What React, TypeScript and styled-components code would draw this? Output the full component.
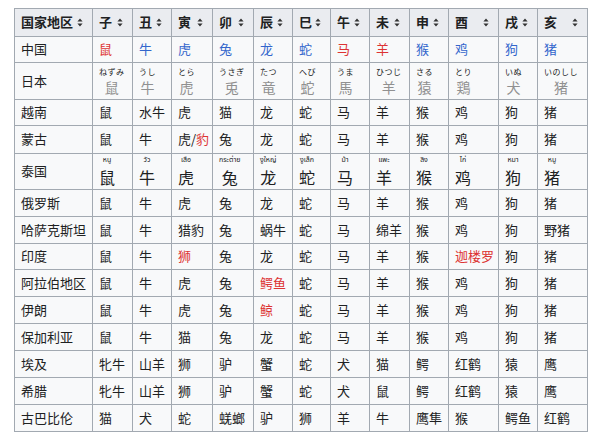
import React from 'react'
import styled, { createGlobalStyle } from 'styled-components'

const GlobalStyle = createGlobalStyle`
  body {
    margin: 0;
    background: #fff;
    font-family: "Noto Sans CJK SC", "Noto Sans", sans-serif;
    color: #202122;
  }
`

type Tone = 'plain' | 'blue' | 'red'

type Cell =
  | string
  | { text: string, tone?: Tone }
  | { parts: { text: string, tone?: Tone }[] }
  | { reading: string, base: string, kind: 'ja' | 'th' }

interface Row {
  name: string
  height: number
  cells: Cell[]
}

const headers = ['国家地区', '子', '丑', '寅', '卯', '辰', '巳', '午', '未', '申', '酉', '戌', '亥']
const widths = [78, 40, 39, 41, 41, 39, 38, 39, 40, 39, 50, 39, 50]

const b = (text: string): Cell => ({ text, tone: 'blue' })
const r = (text: string): Cell => ({ text, tone: 'red' })
const ja = (reading: string, base: string): Cell => ({ reading, base, kind: 'ja' })
const th = (reading: string, base: string): Cell => ({ reading, base, kind: 'th' })

const rows: Row[] = [
  { name: '中国', height: 26, cells: [r('鼠'), b('牛'), b('虎'), b('兔'), b('龙'), b('蛇'), r('马'), r('羊'), b('猴'), b('鸡'), b('狗'), b('猪')] },
  { name: '日本', height: 37, cells: [ja('ねずみ', '鼠'), ja('うし', '牛'), ja('とら', '虎'), ja('うさぎ', '兎'), ja('たつ', '竜'), ja('へび', '蛇'), ja('うま', '馬'), ja('ひつじ', '羊'), ja('さる', '猿'), ja('とり', '鶏'), ja('いぬ', '犬'), ja('いのしし', '猪')] },
  { name: '越南', height: 26, cells: ['鼠', '水牛', '虎', '猫', '龙', '蛇', '马', '羊', '猴', '鸡', '狗', '猪'] },
  { name: '蒙古', height: 28, cells: ['鼠', '牛', { parts: [{ text: '虎/' }, { text: '豹', tone: 'red' }] }, '兔', '龙', '蛇', '马', '羊', '猴', '鸡', '狗', '猪'] },
  { name: '泰国', height: 36, cells: [th('หนู', '鼠'), th('วัว', '牛'), th('เสือ', '虎'), th('กระต่าย', '兔'), th('งูใหญ่', '龙'), th('งูเล็ก', '蛇'), th('ม้า', '马'), th('แพะ', '羊'), th('ลิง', '猴'), th('ไก่', '鸡'), th('หมา', '狗'), th('หมู', '猪')] },
  { name: '俄罗斯', height: 27, cells: ['鼠', '牛', '虎', '兔', '龙', '蛇', '马', '羊', '猴', '鸡', '狗', '猪'] },
  { name: '哈萨克斯坦', height: 27, cells: ['鼠', '牛', '猎豹', '兔', '蜗牛', '蛇', '马', '绵羊', '猴', '鸡', '狗', '野猪'] },
  { name: '印度', height: 26, cells: ['鼠', '牛', r('狮'), '兔', '龙', '蛇', '马', '羊', '猴', r('迦楼罗'), '狗', '猪'] },
  { name: '阿拉伯地区', height: 27, cells: ['鼠', '牛', '虎', '兔', r('鳄鱼'), '蛇', '马', '羊', '猴', '鸡', '狗', '猪'] },
  { name: '伊朗', height: 27, cells: ['鼠', '牛', '虎', '兔', r('鲸'), '蛇', '马', '羊', '猴', '鸡', '狗', '猪'] },
  { name: '保加利亚', height: 27, cells: ['鼠', '牛', '猫', '兔', '龙', '蛇', '马', '羊', '猴', '鸡', '狗', '猪'] },
  { name: '埃及', height: 27, cells: ['牝牛', '山羊', '狮', '驴', '蟹', '蛇', '犬', '猫', '鳄', '红鹤', '猿', '鹰'] },
  { name: '希腊', height: 27, cells: ['牝牛', '山羊', '狮', '驴', '蟹', '蛇', '犬', '鼠', '鳄', '红鹤', '猿', '鹰'] },
  { name: '古巴比伦', height: 27, cells: ['猫', '犬', '蛇', '蜣螂', '驴', '狮', '羊', '牛', '鹰隼', '猴', '鳄鱼', '红鹤'] }
]

const Page = styled.div`
  padding: 8px 0 0 14px;
`

const Table = styled.table`
  border-collapse: collapse;
  table-layout: fixed;
  width: 573px;
  background: #f8f9fa;
  border: 1px solid #a2a9b1;
  font-size: 13px;
  line-height: 1.3;
`

const HeadCell = styled.th`
  background: #eaecf0;
  border: 1px solid #a2a9b1;
  height: 27px;
  padding: 0 9px 0 6px;
  font-weight: bold;
  text-align: left;
`

const HeadInner = styled.div`
  display: flex;
  align-items: center;
  justify-content: space-between;
  white-space: nowrap;
`

const BodyRow = styled.tr<{ $h: number }>`
  height: ${p => p.$h}px;
`

const Td = styled.td`
  border: 1px solid #a2a9b1;
  padding: 0 5px 0 6px;
  white-space: nowrap;
  vertical-align: middle;
`

const Word = styled.span<{ $tone?: Tone }>`
  color: ${p => p.$tone === 'red' ? '#d33' : p.$tone === 'blue' ? '#3366cc' : '#202122'};
`

const Ruby = styled.span`
  display: inline-flex;
  flex-direction: column;
  align-items: center;
  vertical-align: middle;
  line-height: normal;
`

const Reading = styled.span<{ $kind: 'ja' | 'th' }>`
  font-size: ${p => p.$kind === 'ja' ? '8px' : '7px'};
  font-family: ${p => p.$kind === 'ja' ? '"Noto Sans CJK JP", sans-serif' : '"Noto Sans Thai", "Noto Sans", "DejaVu Sans", sans-serif'};
  color: #202122;
  letter-spacing: ${p => p.$kind === 'ja' ? '0.5px' : '0'};
`

const Base = styled.span<{ $kind: 'ja' | 'th' }>`
  font-size: ${p => p.$kind === 'ja' ? '14px' : '16px'};
  font-family: ${p => p.$kind === 'ja' ? '"Noto Sans CJK JP", sans-serif' : '"Noto Sans CJK SC", sans-serif'};
  color: ${p => p.$kind === 'ja' ? '#909090' : '#202122'};
`

function SortIcon () {
  return (
    <svg width='6' height='9' viewBox='0 0 6 9'>
      <path d='M3 0.5 L5.6 3.6 H0.4 Z M3 8.5 L5.6 5.4 H0.4 Z' fill='#333' />
    </svg>
  )
}

function renderCell (cell: Cell) {
  if (typeof cell === 'string') return <Word>{cell}</Word>
  if ('parts' in cell) return cell.parts.map((p, i) => <Word key={i} $tone={p.tone}>{p.text}</Word>)
  if ('reading' in cell) {
    return (
      <Ruby>
        <Reading $kind={cell.kind}>{cell.reading}</Reading>
        <Base $kind={cell.kind}>{cell.base}</Base>
      </Ruby>
    )
  }
  return <Word $tone={cell.tone}>{cell.text}</Word>
}

export default function App () {
  return (
    <Page>
      <GlobalStyle />
      <Table>
        <colgroup>
          {widths.map((w, i) => <col key={i} style={{ width: w }} />)}
        </colgroup>
        <thead>
          <tr>
            {headers.map(h => (
              <HeadCell key={h}>
                <HeadInner>
                  <span>{h}</span>
                  <SortIcon />
                </HeadInner>
              </HeadCell>
            ))}
          </tr>
        </thead>
        <tbody>
          {rows.map(row => (
            <BodyRow key={row.name} $h={row.height}>
              <Td>{row.name}</Td>
              {row.cells.map((c, i) => <Td key={i}>{renderCell(c)}</Td>)}
            </BodyRow>
          ))}
        </tbody>
      </Table>
    </Page>
  )
}
